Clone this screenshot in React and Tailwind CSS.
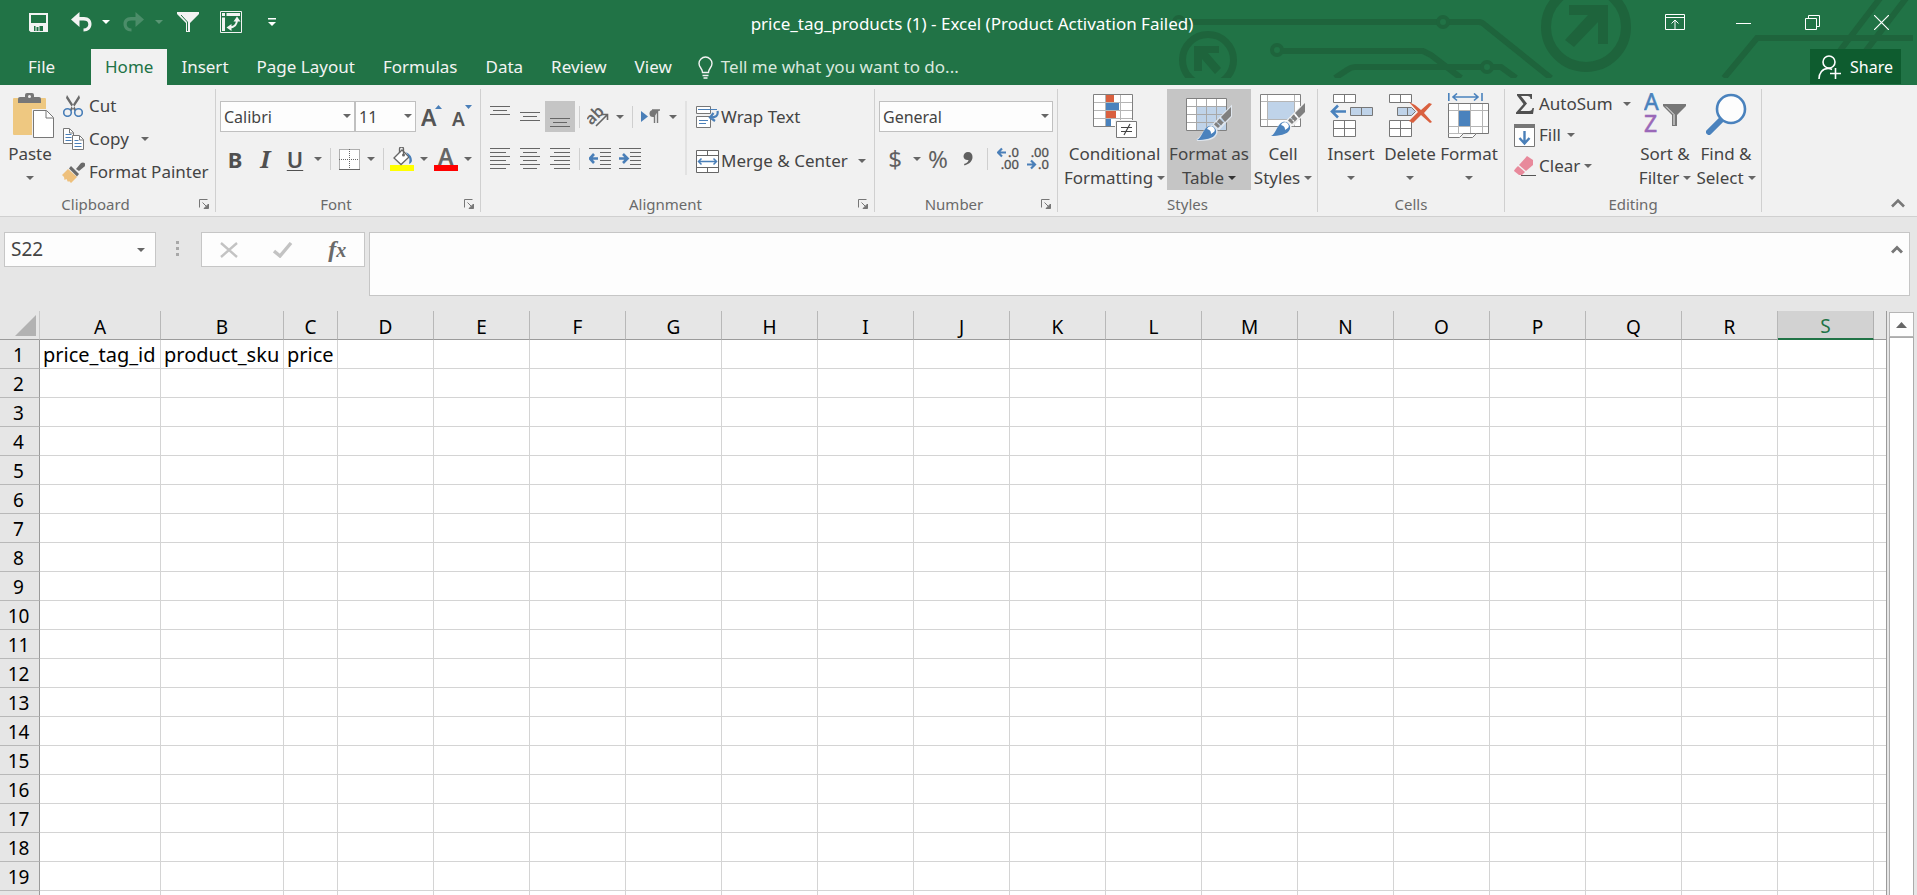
import React, { useState } from 'react';

const TABS = ['Insert', 'Page Layout', 'Formulas', 'Data', 'Review', 'View'];

const COLUMNS = 'ABCDEFGHIJKLMNOPQRS'.split('');
const COLUMN_WIDTHS = { A: 121, B: 123, C: 54 };
const DEFAULT_WIDTH = 96;
const ROW_COUNT = 19;

const CELLS = {
  A1: 'price_tag_id',
  B1: 'product_sku',
  C1: 'price',
};

function Arrow({ className = 'text-[#666666]' }) {
  return (
    <svg width="8" height="4" viewBox="0 0 8 4" className={`shrink-0 ${className}`} aria-hidden="true">
      <path d="M0 0h8L4 4z" fill="currentColor" />
    </svg>
  );
}

function ArrowButton({ label, className = 'w-4' }) {
  return (
    <button aria-label={label} className={`flex h-full items-center justify-center ${className}`}>
      <Arrow />
    </button>
  );
}

function Sep() {
  return <div className="mx-1 h-[22px] w-px shrink-0 bg-[#cfcfcf]" />;
}

function Group({ title, launcher, className, children }) {
  return (
    <section className={`flex shrink-0 flex-col border-r border-[#d0d0d0] ${className}`}>
      <div className="flex h-[107px]">{children}</div>
      <div className="flex h-4 items-center text-[15px] leading-4 text-[#6a6a6a]">
        <span className="flex-1 text-center">{title}</span>
        {launcher && (
          <button aria-label={`${title} settings`} className="w-6 pl-2">
            <svg width="10" height="10" viewBox="0 0 10 10" fill="none" stroke="#777777">
              <path d="M.5 8.500V.5h8M3.500 3.500l4 4" />
              <path d="M9.500 5v4.500H5z" fill="#777777" />
            </svg>
          </button>
        )}
      </div>
    </section>
  );
}

function BigButton({ icon, lines, arrow = true, className = '', arrowClass }) {
  return (
    <button className={`flex h-[101px] shrink-0 flex-col items-center text-[17px] leading-6 text-[#444444] ${className}`}>
      <span className="flex h-[53px] w-full items-start justify-center pt-1">{icon}</span>
      <span className="whitespace-nowrap">{lines[0]}</span>
      <span className="flex h-6 items-center gap-1 whitespace-nowrap">
        {lines[1]}
        {arrow && <Arrow className={arrowClass} />}
      </span>
    </button>
  );
}

function SmallButton({ icon, label, arrow, gap = 'pl-2', className = '' }) {
  return (
    <button className={`flex items-center whitespace-nowrap text-[17px] text-[#444444] ${className}`}>
      <span className="flex w-6 shrink-0 justify-center">{icon}</span>
      <span>{label}</span>
      {arrow && (
        <span className={gap}>
          <Arrow />
        </span>
      )}
    </button>
  );
}

function Combo({ label, value, className }) {
  return (
    <div className={`relative h-[31px] ${className}`}>
      <select
        aria-label={label}
        className="h-full w-full appearance-none border border-[#c0c0c0] bg-[#fdfdfd] px-[3px] text-base text-[#444444] outline-none"
      >
        <option>{value}</option>
      </select>
      <span className="pointer-events-none absolute right-1 top-[13px]">
        <Arrow />
      </span>
    </div>
  );
}

/* ---------- title bar ---------- */

function CircuitArt() {
  return (
    <svg width="767" height="78" viewBox="0 0 767 78" fill="none" stroke="#1e643c" strokeWidth="6" className="absolute right-0 top-0" aria-hidden="true">
      <circle cx="29" cy="22" r="5" strokeWidth="4" />
      <path d="M34 22h254M298 22h31q3 0 6 3l66 53" />
      <circle cx="293" cy="22" r="5" strokeWidth="4" />
      <circle cx="127" cy="50" r="5" strokeWidth="4" />
      <path d="M132 51h141l8 4 30 23" />
      <path d="M185 78l12-8q4-3 8-3h127" />
      <circle cx="337" cy="67" r="5" strokeWidth="4" />
      <path d="M342 67h9l15 11" />
      <circle cx="436" cy="27" r="40" strokeWidth="10" />
      <path d="M419 5h39v39h-10V22l-24 25-9-7 23-25h-19z" fill="#1e643c" stroke="none" />
      <circle cx="58" cy="60" r="25.500" strokeWidth="7" />
      <path d="M44 46h25v7H58l13 15-6 6-13-15v12h-8z" fill="#1e643c" stroke="none" />
      <path d="M574 78l33-40h156M731-3l-42 55M757-3l-42 55" />
    </svg>
  );
}

const undoPath = 'M1 8.500L9.500 1v5h4.500c5 0 7.500 3 7.500 7 0 4.500-3 7.500-8 7.500v-3c3 0 4.800-1.700 4.800-4.300S16.500 9.500 13.500 9.500h-4V16z';

function TitleBar() {
  return (
    <div className="relative flex h-[49px] items-start text-[#f3f3f3]">
      <div className="flex h-11 flex-1 items-center pl-7">
        <button aria-label="Save" className="w-[42px]">
          <svg width="21" height="21" viewBox="0 0 21 21" fill="none">
            <path d="M2 2h17v17H3l-1-1z" stroke="currentColor" strokeWidth="2" />
            <path d="M2 11h17v8H2z" fill="currentColor" />
            <path d="M6 14h9v5H6z" fill="#217346" />
            <path d="M7.500 14h4v5h-4z" fill="currentColor" />
            <path d="M8.500 15h2v4h-2z" fill="#217346" />
          </svg>
        </button>
        <button aria-label="Undo" className="w-[23px]">
          <svg width="22" height="22" viewBox="0 0 22 22"><path d={undoPath} fill="currentColor" /></svg>
        </button>
        <ArrowButton label="Undo history" className="w-[26px] [&>svg]:text-white" />
        <button aria-label="Redo" className="ml-1 w-[23px] opacity-20">
          <svg width="22" height="22" viewBox="0 0 22 22"><path d={undoPath} fill="currentColor" transform="translate(22 0) scale(-1 1)" /></svg>
        </button>
        <ArrowButton label="Redo history" className="w-[26px] opacity-25 [&>svg]:text-white" />
        <button aria-label="Filter" className="ml-[5px] w-[43px]">
          <svg width="22" height="22" viewBox="0 0 22 22">
            <path d="M0 1h22v2l-9 9v9H9v-9L0 3z" fill="currentColor" />
            <path d="M4 4l6.500 7v9" stroke="#217346" fill="none" />
          </svg>
        </button>
        <button aria-label="Pivot table" className="w-12">
          <svg width="22" height="22" viewBox="0 0 22 22" fill="none" stroke="currentColor">
            <path d="M.5.5h21v21H.5z" />
            <path d="M2 2h3v3H2zM6.500 2H20v3H6.500zM2 6.500h3V20H2z" fill="currentColor" stroke="none" />
            <path d="M9 16.500c5 0 8-3 8-8" strokeWidth="2" />
            <path d="M17 5.500l3.500 5h-7zM6.500 16.500l5-3.500v7z" fill="currentColor" stroke="none" />
          </svg>
        </button>
        <button aria-label="Customize toolbar">
          <svg width="8" height="8" viewBox="0 0 8 8" className="text-white"><path d="M0 0h8v1.500H0zM0 4h8L4 8z" fill="currentColor" /></svg>
        </button>
      </div>
      <h1 className="relative z-10 whitespace-nowrap text-[17px] leading-[48px] text-white">
        price_tag_products (1) - Excel (Product Activation Failed)
      </h1>
      <div className="relative z-10 flex h-11 flex-1 items-center justify-end pr-px text-white">
        <button aria-label="Ribbon display options" className="flex w-[69px] justify-center">
          <svg width="20" height="16" viewBox="0 0 20 16" fill="none" stroke="currentColor"><path d="M.5.5h19v15H.5zM.5 3.500h19M10 15V6M6.500 9.500L10 6l3.500 3.500" /></svg>
        </button>
        <button aria-label="Minimize" className="flex w-[69px] justify-center">
          <svg width="15" height="15" viewBox="0 0 15 15" stroke="currentColor"><path d="M0 8.500h15" /></svg>
        </button>
        <button aria-label="Restore" className="flex w-[69px] justify-center">
          <svg width="15" height="15" viewBox="0 0 15 15" fill="none" stroke="currentColor"><path d="M.5 3.500h11v11H.5zM3.500 3.500v-3h11v11h-3" /></svg>
        </button>
        <button aria-label="Close" className="flex w-[69px] justify-center">
          <svg width="15" height="15" viewBox="0 0 15 15" stroke="currentColor" strokeWidth="1.200"><path d="M0 0l15 15M15 0L0 15" /></svg>
        </button>
      </div>
    </div>
  );
}

function TabBar() {
  return (
    <nav className="relative flex h-9 items-stretch text-[17px] text-[#f3f3f3]">
      <button className="w-[91px] pl-7 text-left">File</button>
      <button className="bg-[#f1f1f1] px-3.5 text-[#217346]">Home</button>
      {TABS.map((tab) => (
        <button key={tab} className="px-3.5">{tab}</button>
      ))}
      <button className="flex items-center gap-2 pl-3 text-[#d8e8de]">
        <svg width="15" height="23" viewBox="0 0 15 23" fill="none" stroke="#f3f3f3" strokeWidth="1.400">
          <path d="M4.500 16.500c0-4-3.500-5-3.500-9a6.500 6.500 0 0 1 13 0c0 4-3.500 5-3.500 9zM4.500 19.500h6M5.500 22h4" />
        </svg>
        Tell me what you want to do...
      </button>
      <button className="ml-auto mr-4 flex h-[35px] items-center gap-2 bg-[#0e5c2f] px-2 text-base text-white">
        <svg width="24" height="24" viewBox="0 0 24 24" fill="none" stroke="currentColor" strokeWidth="1.600">
          <circle cx="11" cy="7" r="6" />
          <path d="M1 24c0-6 3.500-10.500 9-10.500 1.500 0 3 .3 4 1M17.500 13v11M12 18.500h11" />
        </svg>
        Share
      </button>
    </nav>
  );
}

/* ---------- ribbon ---------- */

const pasteIcon = (
  <svg width="48" height="46" viewBox="-6 0 48 46">
    <path d="M2 5h31q1 0 1 1v36H2q-1 0-1-1V6q0-1 1-1z" fill="#eec881" />
    <path d="M6 10V6q0-2 2-2h5V2q0-2 2-2h5q2 0 2 2v2h5q2 0 2 2v4z" fill="#777777" />
    <circle cx="17.500" cy="3.500" r="1.500" fill="#f1f1f1" />
    <path d="M20 16h15l8 8v21H20z" fill="#f1f1f1" />
    <path d="M21.500 17.500h13l7 7v20h-20z" fill="#fff" stroke="#777777" />
    <path d="M34 18v7h7" fill="none" stroke="#777777" />
  </svg>
);

const cutIcon = (
  <svg width="20" height="22" viewBox="0 0 20 22" fill="none">
    <path d="M4 0l9.500 15-2 1L3 3zM16 0L6.500 15l2 1L17 3z" fill="#6a6a6a" />
    <circle cx="4.500" cy="17.500" r="3.800" stroke="#4a7fb8" strokeWidth="1.600" />
    <circle cx="15.500" cy="17.500" r="3.800" stroke="#4a7fb8" strokeWidth="1.600" />
  </svg>
);

const copyIcon = (
  <svg width="21" height="22" viewBox="0 0 21 22" fill="#fff" stroke="#777777">
    <path d="M.5.500h6l4 4v11h-10z" />
    <path d="M6.500 1v4h4" fill="none" />
    <path d="M2.500 6.500h6M2.500 9.500h6M2.500 12.500h6" stroke="#4a7fb8" />
    <path d="M9.500 7.500h7l4 4v10h-11z" />
    <path d="M16.500 8v4h4" fill="none" />
    <path d="M11.500 12.500h4M11.500 15.500h7M11.500 18.500h7" stroke="#4a7fb8" />
  </svg>
);

const painterIcon = (
  <svg width="23" height="21" viewBox="0 0 23 21">
    <path d="M6 7l9 8-6 6-2-2-1 1-1.500-3-2 1L2 15l-2-2z" fill="#eec07c" />
    <path d="M9 4l8 8-2 2.500L7 6.500z" fill="#6a6a6a" />
    <path d="M14 7l5-6q2-1 3.500 0t0 3.500L17 9z" fill="#6a6a6a" />
  </svg>
);

function Lines({ rows }) {
  return (
    <svg width="20" height="22" viewBox="0 0 20 22" stroke="#666666" aria-hidden="true">
      {rows.map(([x, y, w]) => (
        <path key={y} d={`M${x} ${y}.5h${w}`} />
      ))}
    </svg>
  );
}

const alignTop = [[0, 0, 20], [3, 4, 14], [0, 8, 20]];
const alignMiddle = [[0, 6, 20], [3, 10, 14], [0, 14, 20]];
const alignBottom = [[0, 12, 20], [3, 16, 14], [0, 20, 20]];
const alignLeft = [[0, 0, 20], [0, 4, 16], [0, 8, 20], [0, 12, 16], [0, 16, 20], [0, 20, 16]];
const alignCenter = [[0, 0, 20], [3, 4, 14], [0, 8, 20], [3, 12, 14], [0, 16, 20], [3, 20, 14]];
const alignRight = [[0, 0, 20], [4, 4, 16], [0, 8, 20], [4, 12, 16], [0, 16, 20], [4, 20, 16]];

function IndentIcon({ right }) {
  return (
    <svg width="22" height="22" viewBox="0 0 22 22" fill="none" stroke="#666666" aria-hidden="true">
      <path d="M0 .5h22M11 4.500h11M11 8.500h11M11 12.500h11M11 16.500h11M0 20.500h22" />
      <path d={right ? 'M0 10.500h7M4 6l4.500 4.500L4 15' : 'M9 10.500H2M5 6L.8 10.500 5 15'} stroke="#4a7fb8" strokeWidth="2.600" />
    </svg>
  );
}

const wrapIcon = (
  <svg width="23" height="22" viewBox="0 0 23 22" fill="#fff" stroke="#777777">
    <path d="M.5.500h14v7H.5zM.5 10.500h14v11H.5z" />
    <path d="M2 3.500h19M3 14.500h9M3 17.500h7" stroke="#4a7fb8" strokeWidth="1.200" />
    <path d="M21.500 5c1 5-2 6.500-7 6.500M17.500 7L14 11.500l5 3.500" fill="none" stroke="#4a7fb8" strokeWidth="2.200" />
  </svg>
);

const mergeIcon = (
  <svg width="23" height="23" viewBox="0 0 23 23" fill="#fff" stroke="#666666">
    <path d="M.5.500h22v22H.5zM.5 5.500h22M.5 17.500h22M11.500.500v5M11.500 17.500v5" />
    <path d="M3 11.500h17M5.500 8.500l-3 3 3 3M17.500 8.500l3 3-3 3" fill="none" stroke="#4a7fb8" strokeWidth="1.500" />
  </svg>
);

function Brush({ x, y, halo }) {
  return (
    <g transform={`translate(${x} ${y})`}>
      <path d="M34 0v9L22 22l-5-5zM0 33c6-2 7-13 14-14 4 0 7 4 5 8-3 6-12 6-19 6z" fill="none" stroke={halo} strokeWidth="2" />
      <path d="M34 0v9l-6 6-4-5z" fill="#808080" />
      <path d="M22.500 11.500l4 4-2.500 3-4-4zM19 15l4 4-2 2-4-3.500z" fill="#808080" />
      <path d="M0 33c5-2 6-12 12-14 4-1 8 3 7 7-2 6-12 7-19 7z" fill="#4a82bd" />
      <path d="M10 22c1-3 5-4 7-1s0 4-3 6c0-3-1-4-4-5z" fill="#fff" />
    </g>
  );
}

const conditionalIcon = (
  <svg width="44" height="46" viewBox="0 0 44 46">
    <path d="M.5 1.500h39v32H.5z" fill="#fff" stroke="#808080" />
    <path d="M1 9.500h38M1 17.500h38M1 25.500h38M12.500 2v31M27.500 2v31" stroke="#b5b5b5" fill="none" />
    <path d="M13 2h8v7h-8zM13 18h10v7H13z" fill="#d9603f" />
    <path d="M13 10h13v7H13zM13 26h5v7h-5z" fill="#4a82bd" />
    <path d="M22 27h22v19H22z" fill="#f1f1f1" />
    <path d="M23.500 28.500h20v16h-20z" fill="#fff" stroke="#777777" />
    <path d="M28 34.500h11M28 38.500h11M37 31l-6 11" stroke="#444444" strokeWidth="1.200" />
  </svg>
);

const tableIcon = (
  <svg width="46" height="48" viewBox="0 0 46 48">
    <path d="M.5 5.500h40v32H.5z" fill="#fff" stroke="#808080" />
    <path d="M11 14h29v23H11z" fill="#bfd3e9" />
    <path d="M1 13.500h39M1 21.500h39M1 29.500h39M10.500 6v31M20.500 6v31M30.500 6v31" stroke="#a8a8a8" fill="none" />
    <Brush x={11} y={14} halo="#dfe6ee" />
  </svg>
);

const cellStylesIcon = (
  <svg width="46" height="46" viewBox="0 0 46 46">
    <path d="M.5 1.500h40v32H.5z" fill="#fff" stroke="#808080" />
    <path d="M8 9h26v17H8z" fill="#bfd3e9" />
    <path d="M1 8.500h39M1 26.500h39M7.500 2v31M34.500 2v31" stroke="#b5b5b5" fill="none" />
    <Brush x={11} y={10} halo="#f1f1f1" />
  </svg>
);

const insertIcon = (
  <svg width="43" height="46" viewBox="0 0 43 46" fill="#fff" stroke="#777777">
    <path d="M3.500 1.500h22v8h-22zM14.500 1.500v8M3.500 27.500h22v16h-22zM14.500 27.500v16M3.500 35.500h22" />
    <path d="M20.500 14.500h22v8h-22zM31.500 14.500v8" fill="#bfd3e9" />
    <path d="M16 18.500H2M8 12.500l-6 6 6 6" fill="none" stroke="#4a82bd" strokeWidth="2.600" />
  </svg>
);

const deleteIcon = (
  <svg width="43" height="46" viewBox="0 0 43 46" fill="#fff" stroke="#777777">
    <path d="M.5 1.500h22v8H.5zM11.500 1.500v8M.5 27.500h22v16H.5zM11.500 27.500v16M.5 35.500h22" />
    <path d="M8.500 14.500h14l4 4-4 4h-14zM18.500 14.500v8" fill="#bfd3e9" />
    <path d="M20 9l6 3 6 5 8-7 3 1-8 9 8 9-2 1-9-8-8 8-4-2 9-9z" fill="#d9603f" stroke="none" />
  </svg>
);

const formatIcon = (
  <svg width="42" height="46" viewBox="0 0 42 46" fill="#fff" stroke="#777777">
    <path d="M.5 10.500h40v30H.5z" />
    <path d="M10.500 11v29M22.500 11v29M34.500 11v29M1 17.500h39M1 33.500h39" stroke="#b5b5b5" fill="none" />
    <path d="M11 18h11v15H11z" fill="#4a82bd" stroke="none" />
    <path d="M.5 40.500v4h11l4-4M14.500 44.500h10l4-4" />
    <path d="M.8 0v8M34 0v8M5 4h25M9 .5L5 4l4 3.500M26 .5L30 4l-4 3.500" stroke="#4a82bd" strokeWidth="1.600" fill="none" />
  </svg>
);

const sumIcon = (
  <svg width="18" height="20" viewBox="0 0 18 20"><path d="M1 0h15v5h-1.500q0-3-3-3H5l6 7.500L4.500 17H13q3 0 3.500-3H18l-1 6H0v-1.500L7.500 10 1 1.500z" fill="#505050" /></svg>
);

const fillIcon = (
  <svg width="22" height="23" viewBox="0 0 22 23">
    <path d="M.5.500h20v22H.5z" fill="#fff" stroke="#777777" />
    <path d="M0 0h21v4H0z" fill="#777777" />
    <path d="M10.500 7v12M5.500 14l5 5.500 5-5.500" fill="none" stroke="#4a7fb8" strokeWidth="2.400" />
  </svg>
);

const clearIcon = (
  <svg width="22" height="20" viewBox="0 0 22 20">
    <path d="M13 0l6 4v5L12 15 5 9z" fill="#e8899b" />
    <path d="M4 10l7 6-3 3H5l-5-4q0-1 4-5z" fill="#e8899b" />
    <path d="M7 19.500h15" stroke="#555555" />
  </svg>
);

const sortIcon = (
  <svg width="42" height="46" viewBox="0 0 42 46" fontFamily="Noto Sans, sans-serif" fontSize="23">
    <text x="0" y="17" fill="#4a82bd" stroke="#4a82bd" strokeWidth="0.500">A</text>
    <text x="0" y="39" fill="#9a68b8" stroke="#9a68b8" strokeWidth="0.500">Z</text>
    <path d="M19 11h23v2l-9 9v11h-5V22l-9-9z" fill="#777777" />
    <path d="M22 13.500l8 8V32" fill="none" stroke="#f1f1f1" />
  </svg>
);

const findIcon = (
  <svg width="41" height="42" viewBox="0 0 41 42">
    <path d="M3 39l15-15" stroke="#4a82bd" strokeWidth="6" strokeLinecap="round" />
    <circle cx="25" cy="16" r="14" fill="#fdfdfd" stroke="#4a82bd" strokeWidth="2.600" />
  </svg>
);

function ClipboardGroup() {
  return (
    <Group title="Clipboard" launcher className="w-[216px]">
      <BigButton icon={pasteIcon} lines={['Paste']} className="w-[60px]" />
      <div className="flex flex-col gap-px pl-px pt-px">
        <SmallButton icon={cutIcon} label="Cut" className="h-8 gap-1" />
        <SmallButton icon={copyIcon} label="Copy" arrow className="h-8 gap-1" />
        <SmallButton icon={painterIcon} label="Format Painter" className="h-8 gap-1" />
      </div>
    </Group>
  );
}

function FontGroup() {
  return (
    <Group title="Font" launcher className="w-[265px]">
      <div className="flex flex-col gap-3 pl-1 pt-3">
        <div className="flex h-[31px] items-center">
          <Combo label="Font name" value="Calibri" className="w-[135px]" />
          <Combo label="Font size" value="11" className="w-[61px]" />
          <button aria-label="Increase font size" className="ml-0.5 flex w-[30px] justify-center">
            <svg width="24" height="24" viewBox="0 0 24 24" fontFamily="Noto Sans, sans-serif" fontWeight="600">
              <text x="0" y="21" fontSize="23" fill="#555555">A</text>
              <path d="M14 4h7l-3.500-4z" fill="#4a7fb8" />
            </svg>
          </button>
          <button aria-label="Decrease font size" className="flex w-[30px] justify-center">
            <svg width="24" height="24" viewBox="0 0 24 24" fontFamily="Noto Sans, sans-serif" fontWeight="600">
              <text x="1" y="21" fontSize="19" fill="#555555">A</text>
              <path d="M14 0h7l-3.500 4z" fill="#4a7fb8" />
            </svg>
          </button>
        </div>
        <div className="flex h-[30px] items-center text-[#505050]">
          <button aria-label="Bold" className="w-[30px] text-[22px] font-bold leading-[26px]">B</button>
          <button aria-label="Italic" className="w-[30px] font-['Noto_Serif','Liberation_Serif',serif] text-2xl font-bold italic leading-[26px]">I</button>
          <button aria-label="Underline" className="w-[30px] text-[22px] font-semibold leading-[26px] underline decoration-1 underline-offset-2">U</button>
          <ArrowButton label="Underline style" />
          <Sep />
          <button aria-label="Borders" className="flex w-7 justify-center">
            <svg width="21" height="21" viewBox="0 0 21 21" fill="#fff" stroke="#666666">
              <path d="M.5.500h20v20H.5zM10.500 0v20M0 10.500h20" strokeDasharray="1 1" />
              <path d="M0 20.500h21" />
            </svg>
          </button>
          <ArrowButton label="Border style" />
          <Sep />
          <button aria-label="Fill color" className="flex w-7 justify-center">
            <svg width="24" height="24" viewBox="0 0 24 24">
              <path d="M0 18h24v6H0z" fill="#ffff00" />
              <path d="M4 11l8-8 7 7-8 7.500z" fill="#fff" stroke="#666666" strokeWidth="1.300" />
              <path d="M9.500 6V2q0-2 2-2t2 2v6" fill="none" stroke="#666666" strokeWidth="1.300" />
              <circle cx="13.500" cy="8" r="1.500" fill="#666666" />
              <path d="M16 5q6 3 6 9-1 3-3 3 1-4 0-7z" fill="#4a7fb8" />
            </svg>
          </button>
          <ArrowButton label="Fill color list" />
          <button aria-label="Font color" className="flex w-7 justify-center">
            <svg width="24" height="24" viewBox="0 0 24 24">
              <text x="4" y="18" fontFamily="Noto Sans, sans-serif" fontWeight="600" fontSize="23" fill="#666666">A</text>
              <path d="M0 18h24v6H0z" fill="#ff0000" />
            </svg>
          </button>
          <ArrowButton label="Font color list" />
        </div>
      </div>
    </Group>
  );
}

function AlignmentGroup() {
  return (
    <Group title="Alignment" launcher className="w-[394px]">
      <div className="flex flex-col gap-3 pl-1 pt-3">
        <div className="flex h-[31px] items-center">
          <button aria-label="Top align" className="flex w-[30px] justify-center"><Lines rows={alignTop} /></button>
          <button aria-label="Middle align" className="flex w-[30px] justify-center"><Lines rows={alignMiddle} /></button>
          <button aria-label="Bottom align" className="flex h-full w-[30px] items-center justify-center bg-[#c5c5c5]"><Lines rows={alignBottom} /></button>
          <Sep />
          <button aria-label="Orientation" className="flex w-7 justify-center">
            <svg width="22" height="22" viewBox="0 0 22 22">
              <text x="-1" y="17" fontFamily="Noto Sans, sans-serif" fontWeight="600" fontSize="16" fill="#666666" transform="rotate(-45 5 12)">ab</text>
              <path d="M9 20L20 9M15 8.500h5.500V14" fill="none" stroke="#666666" strokeWidth="1.600" />
            </svg>
          </button>
          <ArrowButton label="Orientation list" />
          <Sep />
          <button aria-label="Text direction" className="flex w-7 justify-center">
            <svg width="20" height="16" viewBox="0 0 20 16">
              <path d="M0 2l7 5.500L0 13z" fill="#4a7fb8" />
              <path d="M18 1h-6a3.500 3.500 0 0 0 0 7h1z" fill="#777777" />
              <path d="M13.500 1v13M16.500 1v13M11 1h8" stroke="#777777" strokeWidth="1.400" />
            </svg>
          </button>
          <ArrowButton label="Text direction list" />
        </div>
        <div className="flex h-[30px] items-center">
          <button aria-label="Align left" className="flex w-[30px] justify-center"><Lines rows={alignLeft} /></button>
          <button aria-label="Center" className="flex w-[30px] justify-center"><Lines rows={alignCenter} /></button>
          <button aria-label="Align right" className="flex w-[30px] justify-center"><Lines rows={alignRight} /></button>
          <Sep />
          <button aria-label="Decrease indent" className="flex w-8 justify-center"><IndentIcon /></button>
          <button aria-label="Increase indent" className="flex w-7 justify-center"><IndentIcon right /></button>
        </div>
      </div>
      <div className="mx-1 mt-3 h-[74px] w-0.5 bg-[#e2e2e2]" />
      <div className="flex flex-col items-start gap-3 pl-1 pt-3">
        <SmallButton icon={wrapIcon} label="Wrap Text" className="h-8 gap-0.5" />
        <SmallButton icon={mergeIcon} label="Merge & Center" arrow className="h-8 gap-0.5" />
      </div>
    </Group>
  );
}

function DecimalIcon({ increase }) {
  return (
    <svg width="23" height="24" viewBox="0 0 23 24" fontFamily="Noto Sans, sans-serif" fontSize="13" fill="#505050" stroke="#505050" strokeWidth="0.300">
      <text x="22" y="10" textAnchor="end">{increase ? '.0' : '.00'}</text>
      <text x="22" y="22" textAnchor="end">{increase ? '.00' : '.0'}</text>
      <path
        d={increase ? 'M9 5.500H2M5 1.500l-4 4 4 4' : 'M0 17.500h7M4 13.500l4 4-4 4'}
        fill="none"
        stroke="#4a7fb8"
        strokeWidth="2.200"
      />
    </svg>
  );
}

function NumberGroup() {
  return (
    <Group title="Number" launcher className="w-[183px]">
      <div className="flex w-full flex-col gap-3 px-1 pt-3">
        <Combo label="Number format" value="General" className="w-full" />
        <div className="flex h-[30px] items-center text-[#606060]">
          <button aria-label="Accounting format" className="w-8 text-2xl leading-[30px]">$</button>
          <ArrowButton label="Currency list" className="w-3" />
          <button aria-label="Percent style" className="w-[30px] text-2xl leading-[30px]">%</button>
          <button aria-label="Comma style" className="flex w-[30px] justify-center">
            <svg width="10" height="14" viewBox="0 0 10 14"><path d="M5 0c3 0 4.500 2 4.500 5 0 4-3 7-8 8.500L1 12c3-1 4.500-2.500 4.500-4C2.500 8.500.5 6.500.5 4.300S2.500 0 5 0z" fill="#606060" /></svg>
          </button>
          <Sep />
          <button aria-label="Increase decimal" className="flex w-8 justify-center"><DecimalIcon increase /></button>
          <button aria-label="Decrease decimal" className="flex w-7 justify-center"><DecimalIcon /></button>
        </div>
      </div>
    </Group>
  );
}

function Ribbon() {
  return (
    <div className="flex border-b border-[#d0d0d0] bg-[#f1f1f1] py-1">
      <ClipboardGroup />
      <FontGroup />
      <AlignmentGroup />
      <NumberGroup />
      <Group title="Styles" className="w-[260px]">
        <BigButton icon={conditionalIcon} lines={['Conditional', 'Formatting']} className="w-[109px] pl-1" />
        <BigButton icon={tableIcon} lines={['Format as', 'Table']} className="w-[84px] bg-[#c5c5c5]" arrowClass="text-[#333333]" />
        <BigButton icon={cellStylesIcon} lines={['Cell', 'Styles']} className="w-16" />
      </Group>
      <Group title="Cells" className="w-[187px]">
        <BigButton icon={insertIcon} lines={['Insert']} className="w-[66px]" />
        <BigButton icon={deleteIcon} lines={['Delete']} className="w-[52px]" />
        <BigButton icon={formatIcon} lines={['Format']} className="w-[66px]" />
      </Group>
      <Group title="Editing" className="w-[257px]">
        <div className="flex w-[129px] flex-col items-start pl-2">
          <SmallButton icon={sumIcon} label="AutoSum" arrow className="h-[30px] gap-0.5" />
          <SmallButton icon={fillIcon} label="Fill" arrow gap="pl-1" className="h-8 gap-0.5" />
          <SmallButton icon={clearIcon} label="Clear" arrow gap="pl-0.5" className="h-[30px] gap-0.5" />
        </div>
        <BigButton icon={sortIcon} lines={['Sort &', 'Filter']} className="w-[62px]" />
        <BigButton icon={findIcon} lines={['Find &', 'Select']} className="w-[60px]" />
      </Group>
      <button aria-label="Collapse ribbon" className="ml-auto mr-3 flex items-end pb-1">
        <svg width="14" height="10" viewBox="0 0 14 10" fill="none" stroke="#777777" strokeWidth="2.600"><path d="M1 8.500l6-6 6 6" /></svg>
      </button>
    </div>
  );
}

/* ---------- formula bar ---------- */

function FormulaBar() {
  const [cellName, setCellName] = useState('S22');
  const [formula, setFormula] = useState('');

  return (
    <div className="flex items-start py-[15px] pl-1 pr-[7px]">
      <div className="flex h-[35px] w-[152px] items-center border border-[#c6c6c6] bg-[#fdfdfd]">
        <input
          aria-label="Name box"
          value={cellName}
          onChange={(e) => setCellName(e.target.value)}
          className="min-w-0 flex-1 bg-transparent pl-1.5 text-[19px] text-[#444444] outline-none"
        />
        <ArrowButton label="Cell names" className="w-7" />
      </div>
      <svg width="3" height="16" viewBox="0 0 3 16" className="mx-5 mt-[9px] text-[#a8a8a8]" aria-hidden="true">
        <path d="M0 0h3v3H0zM0 6h3v3H0zM0 12h3v3H0z" fill="currentColor" />
      </svg>
      <div className="ml-0.5 flex h-[35px] w-[164px] items-center justify-around border border-[#c6c6c6] bg-[#fdfdfd]">
        <button aria-label="Cancel">
          <svg width="18" height="16" viewBox="0 0 18 16" stroke="#c3c3c3" strokeWidth="2.400"><path d="M1 1l16 14M17 1L1 15" /></svg>
        </button>
        <button aria-label="Enter">
          <svg width="20" height="16" viewBox="0 0 20 16" fill="none" stroke="#c3c3c3" strokeWidth="3.400"><path d="M1 9l6 5L18 1" /></svg>
        </button>
        <button aria-label="Insert function" className="font-['Liberation_Serif',serif] text-2xl font-bold italic leading-7 text-[#6a6a6a]">
          f<span className="text-xl">x</span>
        </button>
      </div>
      <div className="ml-1 flex h-16 flex-1 items-start border border-[#c6c6c6] bg-[#fdfdfd]">
        <textarea
          aria-label="Formula bar"
          value={formula}
          onChange={(e) => setFormula(e.target.value)}
          className="h-full flex-1 resize-none bg-transparent p-1 text-[17px] outline-none"
        />
        <button aria-label="Collapse formula bar" className="px-1.5 pt-3">
          <svg width="12" height="9" viewBox="0 0 12 9" fill="none" stroke="#777777" strokeWidth="3"><path d="M1 7.500l5-5 5 5" /></svg>
        </button>
      </div>
    </div>
  );
}

/* ---------- sheet ---------- */

function Sheet() {
  const rows = Array.from({ length: ROW_COUNT }, (_, i) => i + 1);
  const headEdge = 'border-b border-b-[#9b9b9b]';

  return (
    <div className="flex min-h-0 flex-1">
      <div className="min-w-0 flex-1 overflow-hidden">
        <table className="w-full table-fixed border-separate border-spacing-0 border-r border-[#9b9b9b] text-black">
          <colgroup>
            <col className="w-10" />
            {COLUMNS.map((c) => (
              <col key={c} style={{ width: COLUMN_WIDTHS[c] || DEFAULT_WIDTH }} />
            ))}
            <col />
          </colgroup>
          <thead>
            <tr className="h-[29px] text-[19px] leading-6">
              <th aria-label="Select all" className={`${headEdge} border-r border-r-[#c9c9c9] p-0`}>
                <svg width="21" height="21" viewBox="0 0 21 21" className="ml-auto mr-[3px]"><path d="M21 0v21H0z" fill="#b2b2b2" /></svg>
              </th>
              {COLUMNS.map((c) => (
                <th
                  key={c}
                  scope="col"
                  className={
                    c === 'S'
                      ? 'border-b-2 border-r border-b-[#217346] border-r-[#b0b0b0] bg-[#d2d2d2] p-0 pt-[3px] font-normal text-[#217346]'
                      : `${headEdge} border-r border-r-[#b8b8b8] p-0 pt-1 font-normal`
                  }
                >
                  {c}
                </th>
              ))}
              <th className={`${headEdge} p-0`} />
            </tr>
          </thead>
          <tbody>
            {rows.map((r) => (
              <tr key={r} className="h-[29px] text-[19px] leading-[26px]">
                <th scope="row" className="border-b border-r border-b-[#b8b8b8] border-r-[#9b9b9b] p-0 pr-0.5 pt-0.5 font-normal">{r}</th>
                {COLUMNS.map((c) => (
                  <td key={c} className="whitespace-nowrap border-b border-r border-[#d4d4d4] bg-white p-0 pl-[3px] pt-0.5 text-xl leading-[26px]">
                    {CELLS[c + r]}
                  </td>
                ))}
                <td className="border-b border-[#d4d4d4] bg-white p-0" />
              </tr>
            ))}
            <tr className="h-[29px]">
              <th className="border-r border-[#9b9b9b] p-0" />
              {COLUMNS.map((c) => (
                <td key={c} className="border-r border-[#d4d4d4] bg-white p-0" />
              ))}
              <td className="bg-white p-0" />
            </tr>
          </tbody>
        </table>
      </div>
      <div className="ml-0.5 mr-[3px] flex w-[25px] flex-col pt-px">
        <button aria-label="Scroll up" className="flex h-[25px] shrink-0 items-center justify-center border border-[#b5b5b5] bg-[#fdfdfd]">
          <svg width="11" height="6" viewBox="0 0 11 6"><path d="M0 6h11L5.500 0z" fill="#666666" /></svg>
        </button>
        <div className="flex-1 border border-b-0 border-[#ababab] bg-white" />
      </div>
    </div>
  );
}

function App() {
  return (
    <div className="flex h-screen flex-col overflow-hidden bg-[#e6e6e6] font-['Noto_Sans','Open_Sans',sans-serif]">
      <header className="relative bg-[#217346]">
        <CircuitArt />
        <TitleBar />
        <TabBar />
      </header>
      <Ribbon />
      <FormulaBar />
      <Sheet />
    </div>
  );
}

export default App;
